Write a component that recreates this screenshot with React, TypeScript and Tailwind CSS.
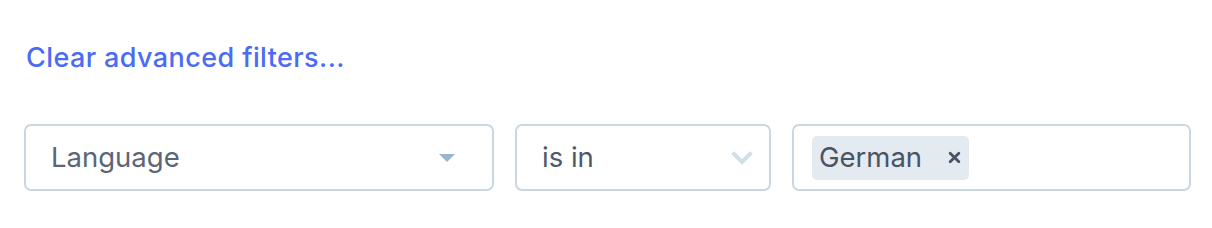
import React from 'react';

const font = { fontFamily: 'Inter, "Noto Sans", sans-serif' };

const App = () => {
  return (
    <div className="w-[1212px] h-[228px] bg-white pl-[24px] pr-[21px] pt-[42px]" style={font}>
      <a href="#" className="block text-[27px] leading-[32px] font-medium tracking-[0.4px] text-[#4b6bf5] pl-[2px]">
        Clear advanced filters...
      </a>

      <div className="mt-[50px] flex gap-[21px]">
        <div className="w-[470px] shrink-0 h-[67px] border-2 border-[#c8d7e2] rounded-[7px] flex items-center justify-between pl-[25px] pr-[36px]">
          <span className="text-[27.5px] text-[#5b6577]">Language</span>
          <svg width="18" height="10" viewBox="0 0 18 10">
            <path d="M1 1 L17 1 L9 9 Z" fill="#9ab5c9" />
          </svg>
        </div>

        <div className="w-[256px] shrink-0 h-[67px] border-2 border-[#c8d7e2] rounded-[7px] flex items-center justify-between pl-[25px] pr-[16px]">
          <span className="text-[27.5px] text-[#4f5869]">is in</span>
          <svg width="22" height="14" viewBox="0 0 22 14">
            <path d="M3 3 L11 11 L19 3" fill="none" stroke="#d0dee8" strokeWidth="4" strokeLinecap="square" />
          </svg>
        </div>

        <div className="w-[399px] shrink-0 h-[67px] border-2 border-[#c8d7e2] rounded-[7px] flex items-center pl-[18px]">
          <div className="h-[44px] w-[157px] bg-[#e3eaf0] rounded-[5px] flex items-center pl-[7px]">
            <span className="text-[27.5px] text-[#4a5365]">German</span>
            <svg className="ml-[26px]" width="13" height="13" viewBox="0 0 12 12">
              <path d="M2 2 L10 10 M10 2 L2 10" stroke="#4a5365" strokeWidth="2.6" strokeLinecap="round" />
            </svg>
          </div>
        </div>
      </div>
    </div>
  );
};

export default App;
